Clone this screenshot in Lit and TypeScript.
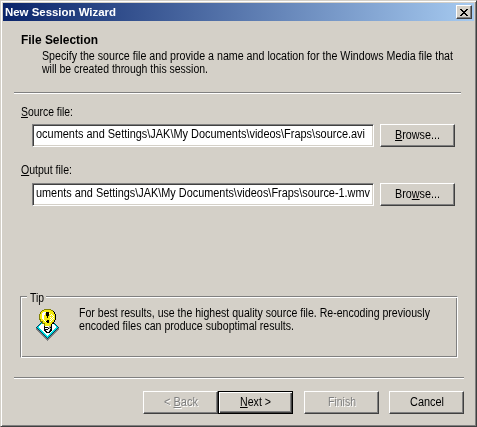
import { LitElement, html, css } from "lit";
import { customElement, property } from "lit/decorators.js";

/* A single line of text condensed or widened to an exact run length. */
@customElement("fit-line")
class FitLine extends LitElement {
  @property({ type: Number }) run = 100;
  static styles = css`
    :host { display: block; white-space: nowrap; flex: none; height: 13px; line-height: 13px; }
    .glyphs { display: inline-block; transform-origin: 0 0; }
  `;
  render() {
    return html`<span class="glyphs"><slot></slot></span>`;
  }
  firstUpdated() {
    const el = this.renderRoot.querySelector(".glyphs") as HTMLElement;
    const natural = el.getBoundingClientRect().width;
    this.style.width = this.run + "px";
    el.style.transform = `scaleX(${this.run / natural})`;
  }
}

@customElement("app-root")
class AppRoot extends LitElement {
  static styles = css`
    :host { display: block; width: 477px; height: 427px; overflow: hidden;
      font: 12px "Liberation Sans", Arial, sans-serif; color: #000; }
    * { box-sizing: border-box; }
    u { text-decoration: underline; text-decoration-thickness: 1px; text-underline-offset: 1px; text-decoration-skip-ink: none; }
    .window { width: 477px; height: 427px; background: #d4d0c8;
      border: 1px solid; border-color: #d4d0c8 #404040 #404040 #d4d0c8;
      box-shadow: inset 1px 1px #fff, inset -1px -1px #808080; padding: 2px;
      display: flex; flex-direction: column; }
    .titlebar { height: 18px; flex: none; display: flex; justify-content: space-between; align-items: center;
      padding: 0 2px; background: linear-gradient(90deg, #0a246a, #a6caf0); color: #fff; font-weight: bold; font-size: 11px; }
    .close { width: 16px; height: 14px; background: #d4d0c8; border: 1px solid; border-color: #fff #404040 #404040 #fff;
      box-shadow: inset -1px -1px #808080; padding: 3px 0 0 3px; }
    .close svg, .icon { display: block; flex: none; }
    .header { height: 71px; padding: 13px 0 0 18px; flex: none; }
    .header .name { font-weight: bold; font-size: 12px; margin-bottom: 3px; }
    .header .desc { padding-left: 21px; }
    .rule { height: 2px; flex: none; margin-left: 11px; width: 447px; border-top: 1px solid #808080; background: #fff; }
    .rule.wide { width: 450px; }
    .form { height: 202px; flex: none; padding: 12px 0 0 18px; }
    .field { height: 58px; }
    .label { height: 18px; }
    .row { display: flex; gap: 6px; padding-left: 11px; }
    .field.out .label { height: 19px; }
    .input { width: 342px; height: 23px; flex: none; background: #fff; border: 1px solid; border-color: #808080 #fff #fff #808080;
      box-shadow: inset 1px 1px #404040, inset -1px -1px #d4d0c8; padding: 3px 0 0 3px; overflow: hidden; }
    .button { width: 75px; height: 23px; flex: none; border: 1px solid; border-color: #fff #404040 #404040 #fff;
      box-shadow: inset -1px -1px #808080; display: flex; justify-content: center; padding-top: 4px; }
    .button.default { border-color: #000; box-shadow: inset 1px 1px #fff, inset -1px -1px #404040, inset -2px -2px #808080; }
    .button.off { color: #808080; text-shadow: 1px 1px #fff; }
    .tip { width: 438px; height: 62px; flex: none; margin-left: 17px; position: relative;
      border: 1px solid; border-color: #808080 #fff #fff #808080;
      box-shadow: inset 1px 1px #fff, inset -1px -1px #808080; display: flex; padding: 12px 0 0 15px; gap: 19px; }
    .legend { position: absolute; left: 6px; top: -5px; padding: 0 2px 0 3px; background: #d4d0c8; }
    .tiptext { margin-top: -2px; }
    .gap { height: 19px; flex: none; }
    .footer { display: flex; flex: none; padding: 12px 10px 0 140px; }
    .footer .finish { margin: 0 10px 0 11px; }
  `;
  render() {
    return html`<div class="window">
      <div class="titlebar">
        <fit-line run="111">New Session Wizard</fit-line>
        <div class="close"><svg width="8" height="7" shape-rendering="crispEdges">
          <path d="M0 0h2v1h-2zM6 0h2v1h-2zM1 1h2v1h-2zM5 1h2v1h-2zM2 2h4v1h-4zM3 3h2v1h-2zM2 4h4v1h-4zM1 5h2v1h-2zM5 5h2v1h-2zM0 6h2v1h-2zM6 6h2v1h-2z"/></svg></div>
      </div>
      <div class="header">
        <fit-line class="name" run="77">File Selection</fit-line>
        <div class="desc">
          <fit-line run="411">Specify the source file and provide a name and location for the Windows Media file that</fit-line>
          <fit-line run="166">will be created through this session.</fit-line>
        </div>
      </div>
      <div class="rule"></div>
      <div class="form">
        <div class="field">
          <div class="label"><fit-line run="52"><u>S</u>ource file:</fit-line></div>
          <div class="row">
            <div class="input"><fit-line run="329">ocuments and Settings\\JAK\\My Documents\\videos\\Fraps\\source.avi</fit-line></div>
            <div class="button"><fit-line run="45"><u>B</u>rowse...</fit-line></div>
          </div>
        </div>
        <div class="field out">
          <div class="label"><fit-line run="51"><u>O</u>utput file:</fit-line></div>
          <div class="row">
            <div class="input"><fit-line run="334">uments and Settings\\JAK\\My Documents\\videos\\Fraps\\source-1.wmv</fit-line></div>
            <div class="button"><fit-line run="45">Bro<u>w</u>se...</fit-line></div>
          </div>
        </div>
      </div>
      <div class="tip">
        <div class="legend"><fit-line run="14">Tip</fit-line></div>
        <svg class="icon" width="24" height="33" shape-rendering="crispEdges">
          <path fill="#808080" d="M0 20L11.5 32L23 20V18H0z"/>
          <path fill="#004060" d="M0 18.5L11.5 7.5L23 18.5L11.5 30z"/>
          <path fill="#00e0e0" d="M1 18L11.5 8.5L22 18L11.5 29z"/>
          <path fill="#fff" d="M2.5 18L11.5 10L20.5 18L11.5 27.5z"/>
          <path fill="#808000" d="M8 0h7v1h2v1h1v1h1v2h1v6h-1v2h-1v2h-2v3H8v-3H6v-2H4v-2H3V5h1V3h1V2h1V1h2z"/>
          <path fill="#000" d="M17 1v1h1v1h1v2h1v6h-1v2h-1v2h-2v3H8v-1h7v-3h2v-2h1v-2h1V5h-1V3h-1V2h-1z"/>
          <path fill="#f4ec10" d="M8 1h7v1h2v1h1v2h1v6h-1v2h-2v2h-1v2H9v-3H7v-2H5v-2H4V5h1V3h1V2h2z"/>
          <path fill="#fff" d="M7 3h3v1H7zM6 4h3v2H6zM6 6h2v4H6zM13 4h1v1h-1zM15 5h1v1h-1zM14 6h1v1h-1zM14 8h1v1h-1zM14 10h1v1h-1zM16 10h1v1h-1zM15 9h1v1h-1zM17 9h1v1h-1zM16 8h1v1h-1zM15 11h1v1h-1zM14 12h1v1h-1zM16 6h1v1h-1zM17 7h1v1h-1zM7 10h1v1H7zM8 11h1v1H8zM9 12h1v1H9z"/>
          <path fill="#000" d="M10 3h3v4h-1v2h-1V7h-1zM11 11h2v1h-2zM10 12h3v1h-3zM11 13h2v1h-2z"/>
          <path fill="#000" d="M8 17h8v5h-1v1h-1v1h-4v-1H9v-1H8z"/>
          <path fill="#fff" d="M9 17h4v1H9zM9 19h3v1H9zM12 20h2v1h-2zM10 21h3v1h-3zM11 22h2v1h-2z"/>
          <path fill="#a0a0a0" d="M13 17h2v1h-2zM12 18h2v1h-2zM13 19h2v1h-2zM13 21h1v1h-1z"/>
        </svg>
        <div class="tiptext">
          <fit-line run="351">For best results, use the highest quality source file. Re-encoding previously</fit-line>
          <fit-line run="215">encoded files can produce suboptimal results.</fit-line>
        </div>
      </div>
      <div class="gap"></div>
      <div class="rule wide"></div>
      <div class="footer">
        <div class="button off"><fit-line run="34">&lt; <u>B</u>ack</fit-line></div>
        <div class="button default"><fit-line run="31"><u>N</u>ext &gt;</fit-line></div>
        <div class="button off finish"><fit-line run="28">Finish</fit-line></div>
        <div class="button"><fit-line run="34">Cancel</fit-line></div>
      </div>
    </div>`;
  }
}
